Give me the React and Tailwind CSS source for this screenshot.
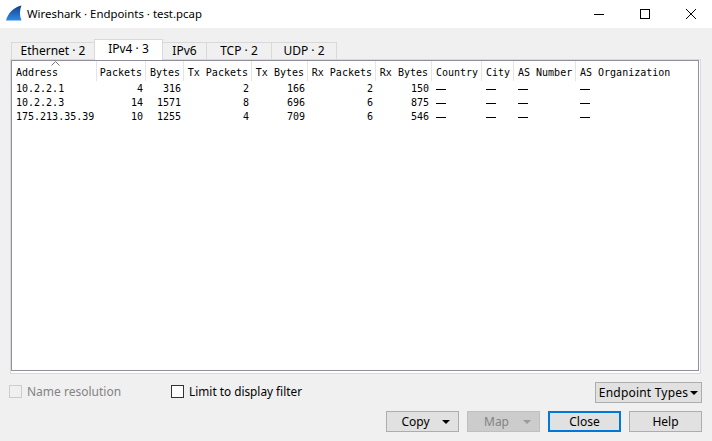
import React from 'react';

const uiFont = 'font-["Noto_Sans",sans-serif]';
const cols = 'grid grid-cols-[85px_49px_38px_68px_56px_68px_56px_50px_32px_62px_1fr]';

const headers = [
    ['Address', 'left'],
    ['Packets', 'right'],
    ['Bytes', 'right'],
    ['Tx Packets', 'right'],
    ['Tx Bytes', 'right'],
    ['Rx Packets', 'right'],
    ['Rx Bytes', 'right'],
    ['Country', 'left'],
    ['City', 'left'],
    ['AS Number', 'left'],
    ['AS Organization', 'left'],
];

const rows = [
    ['10.2.2.1', '4', '316', '2', '166', '2', '150'],
    ['10.2.2.3', '14', '1571', '8', '696', '6', '875'],
    ['175.213.35.39', '10', '1255', '4', '709', '6', '546'],
];

const tabs = [
    ['Ethernet · 2', 'w-[84px]'],
    ['IPv4 · 3', 'w-[69px]'],
    ['IPv6', 'w-[45px]'],
    ['TCP · 2', 'w-[66px]'],
    ['UDP · 2', 'w-[66px]'],
];

const Dash = () => <span className="block w-[10px] h-px bg-black" />;

const Caret = ({ color = 'border-t-black' }) => (
    <span className={`w-0 h-0 border-x-[4px] border-x-transparent border-t-[4px] ${color}`} />
);

const Button = ({ children, focused, disabled }) => (
    <button
        className={`w-[73px] h-[21px] flex items-center justify-center relative text-[12px] border ${
            focused
                ? 'border-2 border-[#0078d7] bg-[#e1e1e1] text-black'
                : disabled
                    ? 'border-[#bfbfbf] bg-[#cccccc] text-[#838383]'
                    : 'border-[#adadad] bg-[#e1e1e1] text-black'
        }`}
    >
        {children}
    </button>
);

export default function App() {
    return (
        <div className={`w-[712px] h-[441px] bg-[#f0f0f0] flex flex-col overflow-hidden text-black ${uiFont}`}>
            {/* title bar */}
            <div className="h-[28px] bg-white flex items-center shrink-0">
                <svg width="16" height="16" viewBox="0 0 16 16" className="ml-[6px] mr-[5px] -mt-[2px]">
                    <defs>
                        <linearGradient id="fin" x1="0" y1="0" x2="0" y2="1">
                            <stop offset="0%" stopColor="#123f86" />
                            <stop offset="100%" stopColor="#2f8be6" />
                        </linearGradient>
                    </defs>
                    <path d="M0 15.5 C2 8 8 2 15.5 0.5 C13.5 5 13.5 11 15.5 15.5 Z" fill="url(#fin)" />
                </svg>
                <span className="text-[11.4px]">Wireshark · Endpoints · test.pcap</span>
                <div className="ml-auto flex items-center">
                    <div className="w-[46px] h-[28px] flex items-center justify-center">
                        <span className="w-[10px] h-px bg-black" />
                    </div>
                    <div className="w-[46px] h-[28px] flex items-center justify-center">
                        <span className="w-[10px] h-[10px] border border-black" />
                    </div>
                    <div className="w-[44px] h-[28px] pl-[2px] flex items-center justify-center">
                        <svg width="10" height="10" viewBox="0 0 10 10" stroke="black" strokeWidth="1">
                            <path d="M0 0L10 10M10 0L0 10" />
                        </svg>
                    </div>
                </div>
            </div>

            {/* tabs */}
            <div className="h-[31px] flex items-end pl-[11px] shrink-0 relative z-10">
                {tabs.map(([label, w], i) => (
                    <div
                        key={label}
                        className={`${w} flex items-center justify-center text-[12px] border border-[#d9d9d9] border-b-0 first:ml-0 -ml-px ${
                            i === 1
                                ? 'h-[21px] -mb-px pb-[2px] bg-white relative z-10'
                                : 'h-[17px] bg-[#f0f0f0]'
                        }`}
                    >
                        {label}
                    </div>
                ))}
            </div>

            {/* table frame */}
            <div className="ml-[10px] mr-[11px] h-[315px] border border-[#d9d9d9] pr-px pb-[2px] bg-white shrink-0">
                <div className="h-full border border-[#8f8f9d] bg-white font-['DejaVu_Sans_Mono',monospace] text-[10px] leading-[14px]">
                    <div className={`${cols} h-[20px] relative`}>
                        <svg width="9" height="5" viewBox="0 0 9 5" className="absolute left-[39px] top-0" fill="none" stroke="#777">
                            <path d="M0.5 4.5L4.5 0.5L8.5 4.5" />
                        </svg>
                        {headers.map(([label, align]) => (
                            <div
                                key={label}
                                className={`flex items-center pt-[4px] border-r border-[#e5e5e5] last:border-r-0 ${
                                    align === 'right' ? 'justify-end pr-[3px]' : 'justify-start pl-[4px]'
                                }`}
                            >
                                {label}
                            </div>
                        ))}
                    </div>
                    <div className="pt-px">
                        {rows.map((row) => (
                            <div key={row[0]} className={`${cols} h-[14px]`}>
                                {row.map((cell, i) => (
                                    <div key={i} className={i === 0 ? 'pl-[4px] text-left' : 'pr-[3px] text-right'}>
                                        {cell}
                                    </div>
                                ))}
                                {[0, 1, 2, 3].map((i) => (
                                    <div key={`d${i}`} className="pl-[4px] flex items-center"><Dash /></div>
                                ))}
                            </div>
                        ))}
                    </div>
                </div>
            </div>

            {/* options row */}
            <div className="flex items-center h-[21px] mt-[8px] pl-[9px] pr-[10px] text-[12px] shrink-0">
                <span className="-mt-[2px] w-[13px] h-[13px] border border-[#cccccc] bg-[#f0f0f0]" />
                <span className="-mt-[2px] ml-[5px] text-[#838383]">Name resolution</span>
                <span className="-mt-[2px] ml-[50px] w-[13px] h-[13px] border border-[#333] bg-white" />
                <span className="-mt-[2px] ml-[5px] text-[11.8px]">Limit to display filter</span>
                <button className="ml-auto w-[107px] h-[21px] flex items-center justify-center gap-[2px] bg-[#e1e1e1] border border-[#adadad] tracking-[0.2px]">
                    Endpoint Types <Caret />
                </button>
            </div>

            {/* buttons */}
            <div className="flex justify-end gap-[8px] mt-[8px] pr-[10px] shrink-0">
                <Button>
                    <span className="mr-[14px]">Copy</span>
                    <span className="absolute right-[8px] flex"><Caret /></span>
                </Button>
                <Button disabled>
                    <span className="mr-[14px]">Map</span>
                    <span className="absolute right-[8px] flex"><Caret color="border-t-[#9a9a9a]" /></span>
                </Button>
                <Button focused>Close</Button>
                <Button>Help</Button>
            </div>
        </div>
    );
}
